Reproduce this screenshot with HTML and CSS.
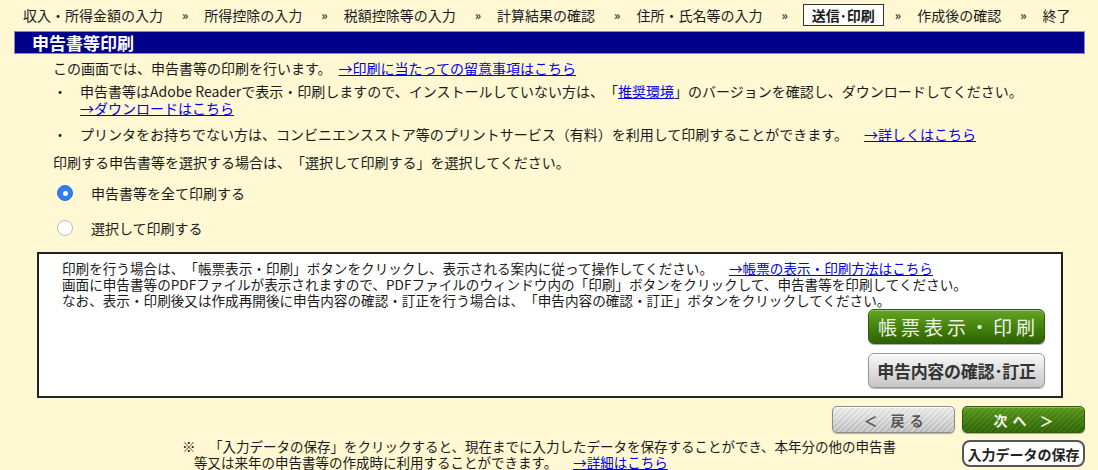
FILE: index.html
```html
<!DOCTYPE html>
<html lang="ja">
<head>
<meta charset="utf-8">
<title>申告書等印刷</title>
<link rel="stylesheet" href="styles.css">
</head>
<body>
<nav class="steps">
  <span class="step">収入・所得金額の入力</span><span class="sep">»</span>
  <span class="step">所得控除の入力</span><span class="sep">»</span>
  <span class="step">税額控除等の入力</span><span class="sep">»</span>
  <span class="step">計算結果の確認</span><span class="sep">»</span>
  <span class="step">住所・氏名等の入力</span><span class="sep">»</span>
  <span class="step current">送信･印刷</span><span class="sep">»</span>
  <span class="step">作成後の確認</span><span class="sep">»</span>
  <span class="step">終了</span>
</nav>

<h1 class="title">申告書等印刷</h1>

<main class="content">
  <p class="intro">この画面では、申告書等の印刷を行います。<a href="#" class="link lead-sm">→印刷に当たっての留意事項はこちら</a></p>
  <ul class="notes">
    <li class="note"><span class="dot">・</span><span class="note-text">申告書等はAdobe Readerで表示・印刷しますので、インストールしていない方は、「<a href="#" class="link">推奨環境</a>」のバージョンを確認し、ダウンロードしてください。<br><a href="#" class="link">→ダウンロードはこちら</a></span></li>
    <li class="note"><span class="dot">・</span><span class="note-text">プリンタをお持ちでない方は、コンビニエンスストア等のプリントサービス（有料）を利用して印刷することができます。<a href="#" class="link lead">→詳しくはこちら</a></span></li>
  </ul>
  <p class="select-hint">印刷する申告書等を選択する場合は、「選択して印刷する」を選択してください。</p>
  <div class="radios">
    <label class="radio"><span class="radio-mark on"></span>申告書等を全て印刷する</label>
    <label class="radio"><span class="radio-mark"></span>選択して印刷する</label>
  </div>
</main>

<section class="print-box">
  <p class="box-text">印刷を行う場合は、「帳票表示・印刷」ボタンをクリックし、表示される案内に従って操作してください。<a href="#" class="link lead">→帳票の表示・印刷方法はこちら</a><br>画面に申告書等のPDFファイルが表示されますので、PDFファイルのウィンドウ内の「印刷」ボタンをクリックして、申告書等を印刷してください。<br>なお、表示・印刷後又は作成再開後に申告内容の確認・訂正を行う場合は、「申告内容の確認・訂正」ボタンをクリックしてください。</p>
  <div class="box-buttons">
    <button class="btn btn-print">帳票表示・印刷</button>
    <button class="btn btn-confirm">申告内容の確認･訂正</button>
  </div>
</section>

<div class="actions">
  <div class="nav-buttons">
    <button class="btn btn-back">＜ 戻る</button>
    <button class="btn btn-next">次へ ＞</button>
  </div>
  <div class="save-row">
    <p class="save-note">※　「入力データの保存」をクリックすると、現在までに入力したデータを保存することができ、本年分の他の申告書<br><span class="indent">等又は来年の申告書等の作成時に利用することができます。</span><a href="#" class="link lead">→詳細はこちら</a></p>
    <button class="btn btn-save">入力データの保存</button>
  </div>
</div>
</body>
</html>
```

FILE: styles.css
```css
* { box-sizing: border-box; }

html, body {
  margin: 0;
  padding: 0;
  background: #fff8d3;
}

body {
  font-family: "Noto Sans CJK JP", "Liberation Sans", sans-serif;
  color: #1a1a1a;
  font-size: 14px;
  text-spacing-trim: space-all;
}

p { margin: 0; }

.link {
  color: #0000ee;
  text-decoration: underline;
}

.lead { margin-left: 16px; }
.lead-sm { margin-left: 7px; }

/* step navigation */
.steps {
  display: flex;
  align-items: center;
  height: 22px;
  margin-top: 4px;
  padding-left: 23px;
  font-size: 14px;
  line-height: 20px;
  white-space: nowrap;
}

.sep {
  margin: 0 16px 0 19px;
  font-weight: bold;
  font-size: 12px;
  color: #333;
}

.current {
  border: 1px solid #333;
  background: #fff;
  font-weight: bold;
  padding: 0 8px;
  margin: 0 -8px 0 -1px;
  line-height: 20px;
}

/* title bar */
.title {
  margin: 5px 13px 0 14px;
  height: 23px;
  background: #00008a;
  border: 1px solid #8888bb;
  color: #fff;
  font-size: 17px;
  font-weight: bold;
  line-height: 21px;
  padding-left: 17px;
}

/* main content */
.content {
  padding-left: 53px;
}

.intro {
  margin-top: 4px;
  line-height: 20px;
}

.notes {
  list-style: none;
  margin: 5px 0 0;
  padding: 0;
}

.note {
  display: flex;
  line-height: 17px;
  margin-bottom: 9px;
}

.dot {
  width: 27px;
  flex: none;
}

.select-hint {
  margin-top: 5px;
  line-height: 20px;
}

.radios {
  display: flex;
  flex-direction: column;
  gap: 15px;
  margin-top: 11px;
  padding-left: 4px;
}

.radio {
  display: flex;
  align-items: center;
  height: 20px;
  gap: 18px;
}

.radio-mark {
  width: 16px;
  height: 16px;
  border-radius: 50%;
  border: 1px solid #bdbdbd;
  background: #fff;
  display: flex;
  align-items: center;
  justify-content: center;
  flex: none;
}

.radio-mark.on {
  background: #2f7df6;
  border-color: #2a72e0;
}

.radio-mark.on::after {
  content: "";
  width: 5px;
  height: 5px;
  border-radius: 50%;
  background: #fff;
}

/* print box */
.print-box {
  margin: 14px 35px 0 37px;
  height: 146px;
  background: #fff;
  border: 2px solid #222;
  padding: 6px 16px 0 23px;
  display: flex;
  flex-direction: column;
}

.box-text {
  font-size: 13.6px;
  line-height: 16px;
}

.box-buttons {
  display: flex;
  flex-direction: column;
  align-items: flex-end;
  gap: 9px;
  margin-top: 1px;
}

.btn {
  font-family: "Noto Sans CJK JP", "Liberation Sans", sans-serif;
  cursor: pointer;
  padding: 0;
}

.btn-print,
.btn-confirm {
  width: 177px;
  height: 35px;
  border-radius: 6px;
}

.btn-print {
  background: linear-gradient(#64a522, #46830f 50%, #2d6303);
  border: 1px solid #2f5c0b;
  color: #eef5e4;
  font-size: 19px;
  letter-spacing: 4px;
  text-indent: 4px;
  box-shadow: inset 0 1px 0 rgba(255,255,255,.35), 0 1px 1px rgba(0,0,0,.35);
}

.btn-confirm {
  background: linear-gradient(#f8f8f8, #e0e0e0 50%, #c6c6c6);
  border: 1px solid #999;
  color: #333;
  font-size: 17px;
  font-weight: bold;
  letter-spacing: -0.3px;
  box-shadow: inset 0 1px 0 #fff, 0 1px 1px rgba(0,0,0,.3);
}

/* bottom actions */
.actions {
  padding-right: 13px;
}

.nav-buttons {
  display: flex;
  justify-content: flex-end;
  gap: 7px;
  margin-top: 8px;
}

.btn-back,
.btn-next {
  width: 123px;
  height: 27px;
  border-radius: 5px;
  font-size: 14px;
  font-weight: bold;
  letter-spacing: 5px;
  text-indent: 5px;
}

.btn-back {
  background:
    repeating-linear-gradient(135deg, rgba(255,255,255,.25) 0 2px, rgba(0,0,0,.03) 2px 4px),
    linear-gradient(#ececec, #d6d6d6 50%, #bdbdbd);
  border: 1px solid #8d8d8d;
  color: #555;
  box-shadow: inset 0 1px 0 rgba(255,255,255,.8), 0 1px 1px rgba(0,0,0,.3);
}

.btn-next {
  background:
    repeating-linear-gradient(135deg, rgba(255,255,255,.06) 0 2px, rgba(0,0,0,.04) 2px 4px),
    linear-gradient(#5c9c1c, #437e0d 50%, #2f6604);
  border: 1px solid #2f5c0b;
  color: #f2f7ea;
  box-shadow: inset 0 1px 0 rgba(255,255,255,.3), 0 1px 1px rgba(0,0,0,.3);
}

.save-row {
  display: flex;
  justify-content: space-between;
  align-items: flex-start;
  margin-top: 5px;
  padding-left: 182px;
}

.save-note {
  font-size: 13.5px;
  line-height: 16px;
  white-space: nowrap;
}

.indent { padding-left: 12px; }

.btn-save {
  margin-top: 2px;
  width: 123px;
  height: 27px;
  background: #fff;
  border: 2px solid #555;
  border-radius: 8px;
  font-size: 14px;
  font-weight: bold;
  color: #222;
}
```
